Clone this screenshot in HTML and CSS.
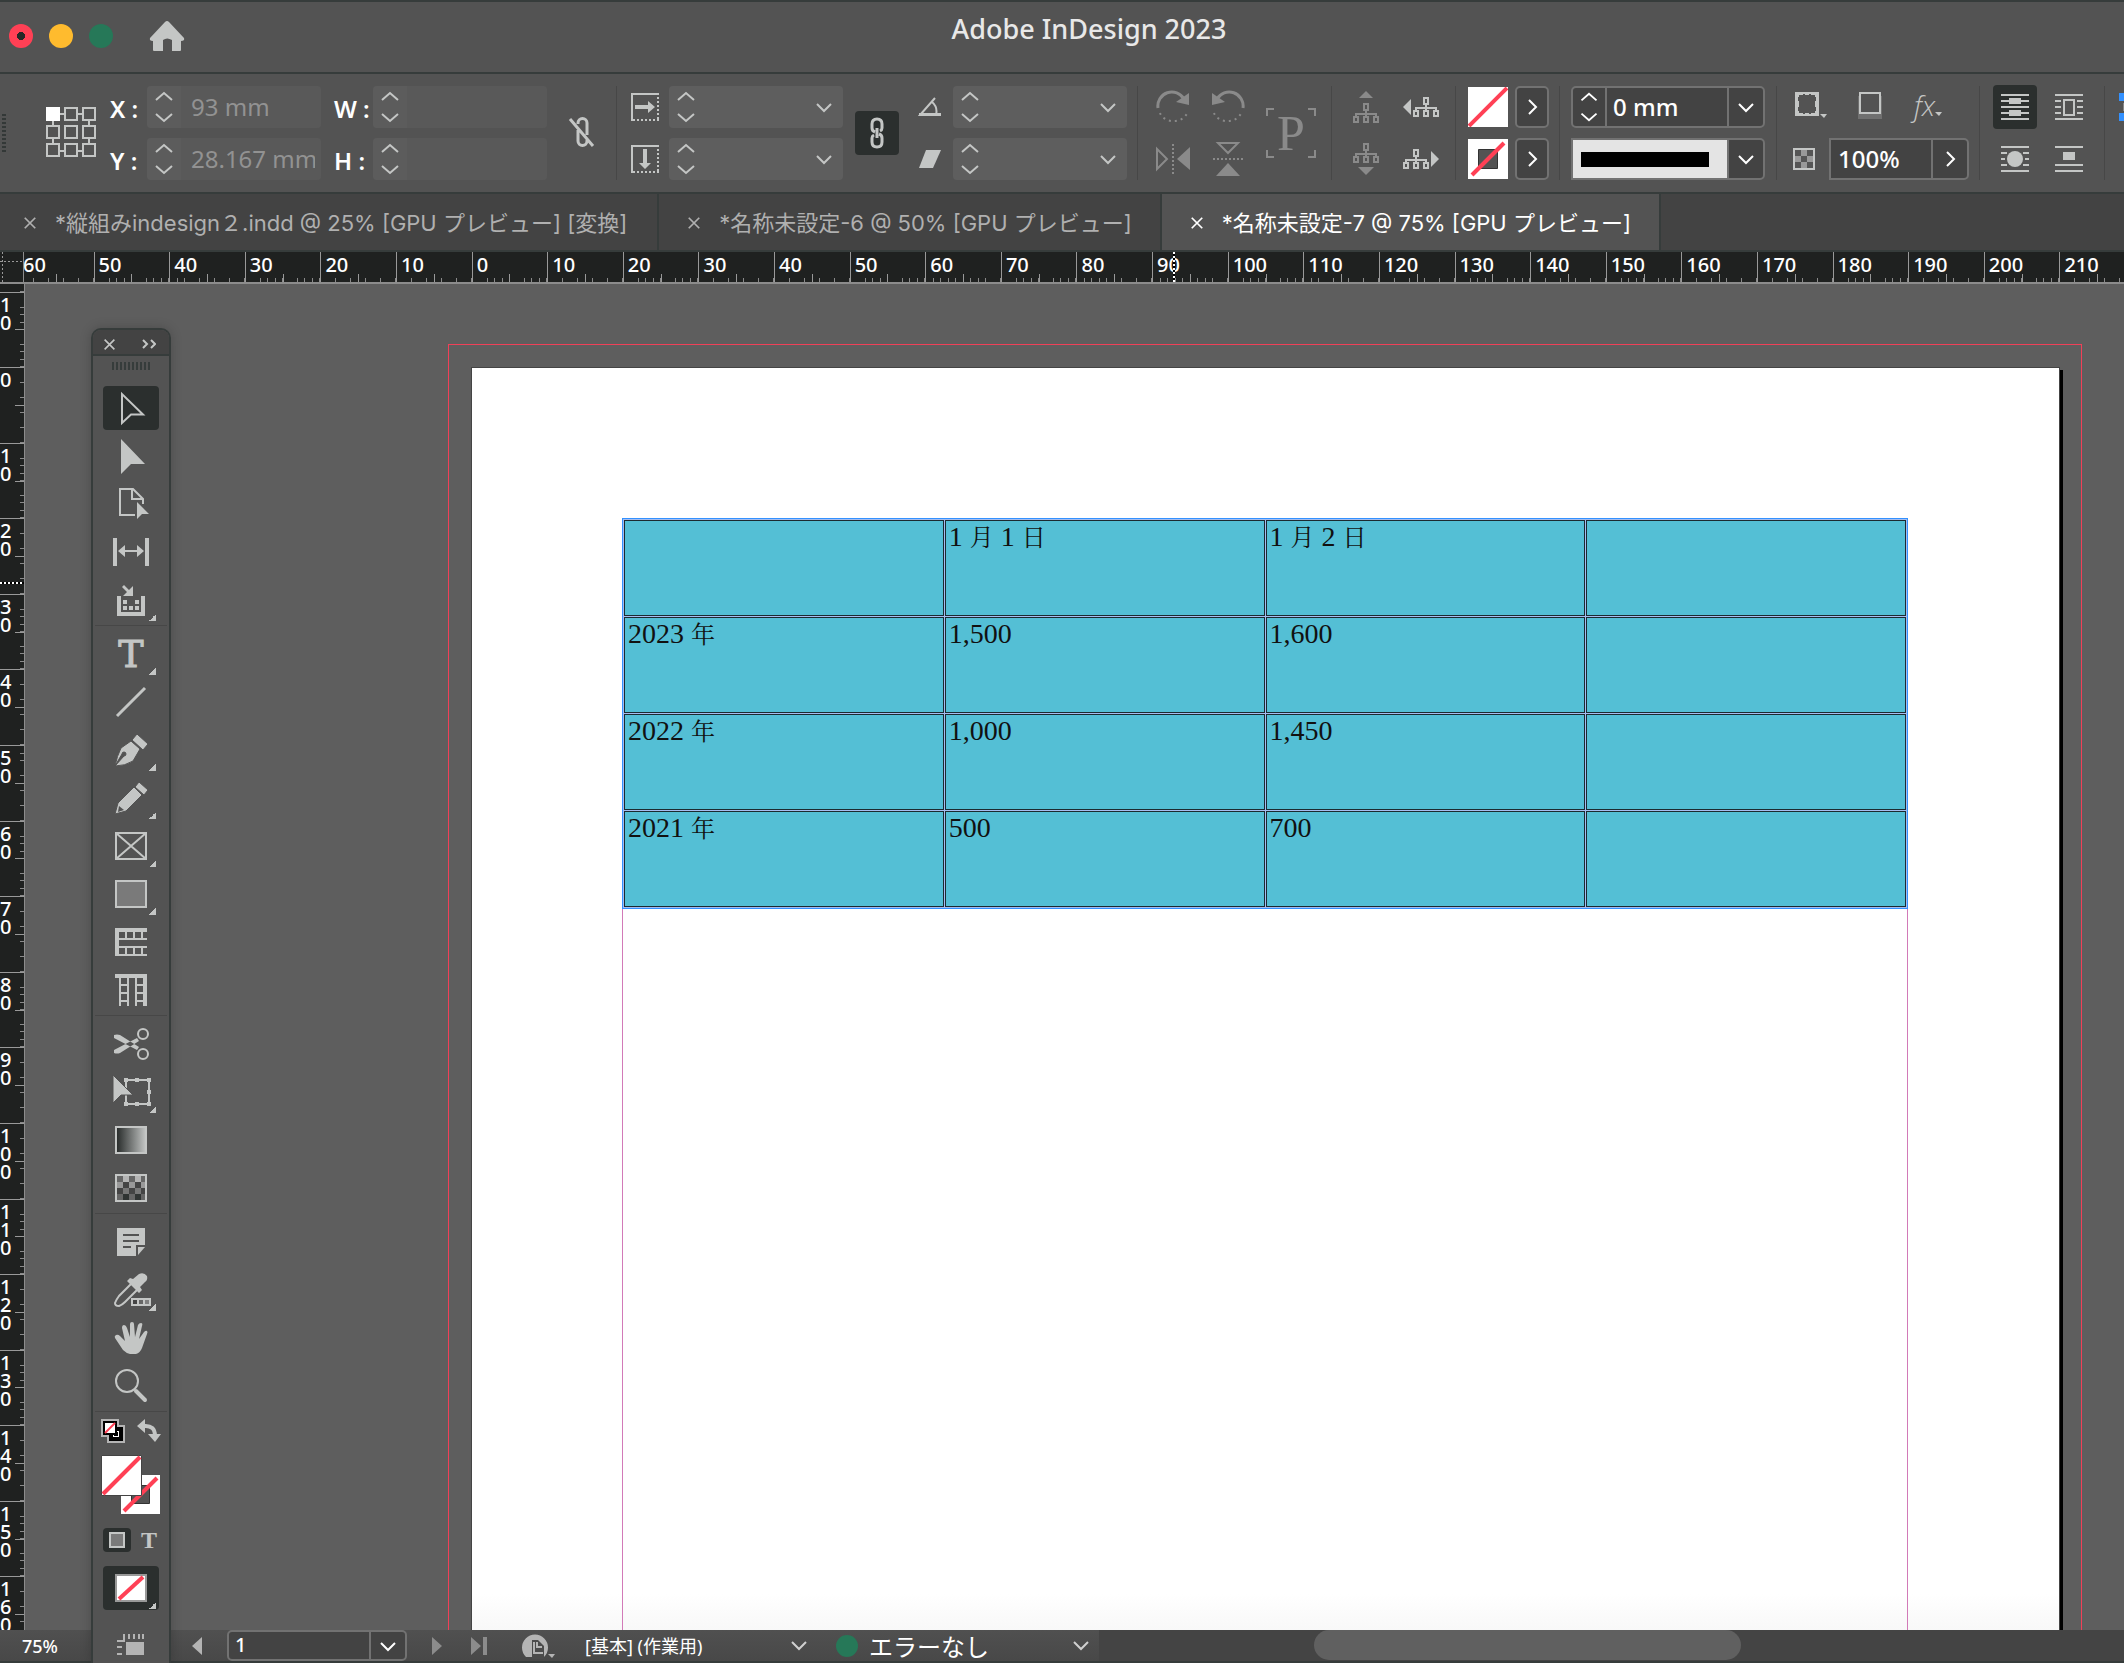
FILE: index.html
```html
<!DOCTYPE html>
<html lang="ja">
<head>
<meta charset="utf-8">
<title>Adobe InDesign 2023</title>
<link rel="stylesheet" href="styles.css">
</head>
<body>
<svg class="defs" width="0" height="0" aria-hidden="true">
  <defs>
    <symbol id="i-steps" viewBox="0 0 34 38"><path d="M9 12l8-7 8 7M9 26l8 7 8-7"/></symbol>
    <symbol id="i-down" viewBox="0 0 20 20"><path d="M3 7l7 7 7-7"/></symbol>
    <symbol id="i-right" viewBox="0 0 20 20"><path d="M7 3l7 7-7 7"/></symbol>
    <symbol id="i-close" viewBox="0 0 16 16"><path d="M2 2l12 12M14 2L2 14"/></symbol>
    <symbol id="i-tree" viewBox="0 0 26 20"><path d="M11 1h4v6h-4zM13 7v4M3 14v-3h20v3M1 14h4v5H1zM11 14h4v5h-4zM21 14h4v5h-4zM13 11v3" fill="none" stroke="currentColor" stroke-width="2"/></symbol>
    <linearGradient id="g-fade"><stop offset="0" stop-color="#242827"/><stop offset="1" stop-color="#c4c6c5"/></linearGradient>
  </defs>
</svg>
<div class="app">
  <header class="titlebar">
    <div class="lights">
      <button class="light red" aria-label="閉じる"></button>
      <button class="light yellow" aria-label="しまう"></button>
      <button class="light green" aria-label="拡大"></button>
      <button class="home" aria-label="ホーム"><svg width="36" height="32" viewBox="0 0 36 32"><path d="M18 1q1 0 2 1l15 16q1 3-3 3v9q0 1-1 1h-8V20q-5-3-9 0v11H5q-1 0-1-1v-9q-4 0-3-3L16 2q1-1 2-1z" fill="currentColor"/></svg></button>
    </div>
    <h1>Adobe InDesign 2023</h1>
  </header>

  <section class="control" aria-label="コントロール">
    <span class="grip"></span>
    <button class="refpoint" aria-label="基準点"><svg width="50" height="52" viewBox="0 0 50 52"><g fill="none" stroke="#c4c6c5" stroke-width="2"><path d="M14 7h4M32 7h4M14 44h4M32 44h4M7 14v5M43 14v5M7 32v5M43 32v5"/><path fill="#fff" stroke="#fff" d="M1 1h12v12H1z"/><path d="M19 1h12v12H19zM37 1h12v12H37zM1 19h12v12H1zM19 19h12v12H19zM37 19h12v12H37zM1 37h12v12H1zM19 37h12v12H19zM37 37h12v12H37z"/></g></svg></button>
    <div class="group coords">
      <label for="fx">X :</label>
      <div class="field dim"><svg class="steps"><use href="#i-steps"/></svg><input id="fx" value="93 mm"></div>
      <label for="fw">W :</label>
      <div class="field dim"><svg class="steps"><use href="#i-steps"/></svg><input id="fw"></div>
      <label for="fy">Y :</label>
      <div class="field dim"><svg class="steps"><use href="#i-steps"/></svg><input id="fy" value="28.167 mm"></div>
      <label for="fh">H :</label>
      <div class="field dim"><svg class="steps"><use href="#i-steps"/></svg><input id="fh"></div>
    </div>
    <button class="icon unlink" aria-label="縦横比を固定"><svg width="28" height="32" viewBox="0 0 28 32" fill="none" stroke="currentColor" stroke-width="3"><path d="M10 8V7a4 4 0 0 1 9 0v12M10 14v11a4 4 0 0 0 9 0v-1M2 3l23 27"/></svg></button>

    <div class="group scale">
      <svg width="28" height="28" viewBox="0 0 28 28"><path d="M1 28V1h27" fill="none" stroke="#c4c6c5" stroke-width="2"/><path d="M27 4v24M2 27h26" fill="none" stroke="#c4c6c5" stroke-width="2" stroke-dasharray="2 2"/><path d="M4 12h13V8l7 6-7 6v-4H4z" fill="#c4c6c5"/></svg>
      <div class="field"><svg class="steps"><use href="#i-steps"/></svg><input aria-label="拡大 X"><button class="drop" aria-label="拡大 X の候補"><svg><use href="#i-down"/></svg></button></div>
      <button class="toggle tall" aria-label="拡大率を連動"><svg width="20" height="32" viewBox="0 0 20 32" fill="none" stroke="#c4c6c5" stroke-width="3"><path d="M8 15q-3-1-3-4V7q0-5 5-5t5 5v4q0 2-2 3M12 17q3 1 3 4v4q0 5-5 5t-5-5v-4q0-2 2-3M10 11v10"/></svg></button>
      <svg class="m" width="24" height="20" viewBox="0 0 24 20"><path d="M17 1L2 18h21M14 5q6 5 4 13" fill="none" stroke="#c4c6c5" stroke-width="2"/><path d="M1 16h22v3H1z" fill="#c4c6c5"/></svg>
      <div class="field"><svg class="steps"><use href="#i-steps"/></svg><input aria-label="回転角度"><button class="drop" aria-label="回転角度の候補"><svg><use href="#i-down"/></svg></button></div>
      <svg width="28" height="28" viewBox="0 0 28 28"><path d="M1 28V1h27" fill="none" stroke="#c4c6c5" stroke-width="2"/><path d="M27 4v24M2 27h26" fill="none" stroke="#c4c6c5" stroke-width="2" stroke-dasharray="2 2"/><path d="M12 4h4v14h4l-6 6-6-6h4z" fill="#c4c6c5"/></svg>
      <div class="field"><svg class="steps"><use href="#i-steps"/></svg><input aria-label="拡大 Y"><button class="drop" aria-label="拡大 Y の候補"><svg><use href="#i-down"/></svg></button></div>
      <svg class="m" width="24" height="20" viewBox="0 0 24 20"><path d="M8 1h15l-8 18H1z" fill="#c4c6c5"/></svg>
      <div class="field"><svg class="steps"><use href="#i-steps"/></svg><input aria-label="傾斜角度"><button class="drop" aria-label="傾斜角度の候補"><svg><use href="#i-down"/></svg></button></div>
    </div>

    <div class="group rotate off">
      <button class="icon" aria-label="右に回転"><svg width="34" height="34" viewBox="0 0 34 34" fill="none" stroke="currentColor" stroke-width="3"><path d="M2 18A14 14 0 0 1 28 9"/><path d="M4 23a14 11 0 0 0 27 0" stroke-width="2" stroke-dasharray="2 4"/><path d="M33 3v12l-13-3z" fill="currentColor" stroke="none"/></svg></button>
      <button class="icon" aria-label="左に回転"><svg width="34" height="34" viewBox="0 0 34 34" fill="none" stroke="currentColor" stroke-width="3"><path d="M32 18A14 14 0 0 0 6 9"/><path d="M3 23a14 11 0 0 0 27 0" stroke-width="2" stroke-dasharray="2 4"/><path d="M1 3v12l13-3z" fill="currentColor" stroke="none"/></svg></button>
      <button class="icon pbox" aria-label="変換の表示"><svg width="50" height="50" viewBox="0 0 50 50" fill="none" stroke="currentColor" stroke-width="2"><path d="M1 8V1h7M42 1h7v7M49 42v7h-7M8 49H1v-7"/></svg><span>P</span></button>
      <button class="icon" aria-label="水平方向に反転"><svg width="36" height="34" viewBox="0 0 36 34" fill="none" stroke="currentColor" stroke-width="2"><path d="M2 7v20l10-10z"/><path d="M18 2v31" stroke-dasharray="2 2"/><path d="M35 5v23L22 17z" fill="currentColor" stroke="none"/></svg></button>
      <button class="icon" aria-label="垂直方向に反転"><svg width="32" height="36" viewBox="0 0 32 36" fill="none" stroke="currentColor" stroke-width="2"><path d="M6 2h20L16 12z"/><path d="M1 18h30" stroke-dasharray="2 2"/><path d="M4 35h24L16 22z" fill="currentColor" stroke="none"/></svg></button>
    </div>

    <div class="group tree">
      <button class="icon off" aria-label="コンテナーを選択"><svg width="26" height="34" viewBox="0 0 26 34"><path d="M6 8l7-7 7 7z" fill="currentColor"/><use href="#i-tree" y="13" width="26" height="20"/></svg></button>
      <button class="icon" aria-label="前を選択"><svg width="36" height="22" viewBox="0 0 36 22"><path d="M8 3v16l-8-8z" fill="currentColor"/><use href="#i-tree" x="10" y="1" width="26" height="20"/></svg></button>
      <button class="icon off" aria-label="内容を選択"><svg width="26" height="34" viewBox="0 0 26 34"><path d="M5 25h16l-8 8z" fill="currentColor"/><use href="#i-tree" y="1" width="26" height="20"/></svg></button>
      <button class="icon" aria-label="次を選択"><svg width="36" height="22" viewBox="0 0 36 22"><path d="M28 3v16l8-8z" fill="currentColor"/><use href="#i-tree" y="1" width="26" height="20"/></svg></button>
    </div>

    <div class="group paint">
      <button class="swatch" aria-label="塗り"><svg width="40" height="40" viewBox="0 0 40 40"><path fill="#fff" d="M0 0h40v40H0z"/><path d="M1 39L39 1" stroke="#ff4055" stroke-width="4"/></svg></button>
      <button class="box arrow" aria-label="塗りの選択"><svg><use href="#i-right"/></svg></button>
      <button class="swatch" aria-label="線"><svg width="40" height="40" viewBox="0 0 40 40"><path fill="#fff" d="M0 0h40v40H0z"/><path fill="#535353" stroke="#333" d="M10.500 10.500h19v19h-19z"/><path d="M4 36L36 4" stroke="#ff4055" stroke-width="4"/></svg></button>
      <button class="box arrow" aria-label="線の選択"><svg><use href="#i-right"/></svg></button>
    </div>

    <div class="group stroke">
      <div class="box combo"><svg class="steps"><use href="#i-steps"/></svg><input aria-label="線幅" value="0 mm"><button class="drop" aria-label="線幅の候補"><svg><use href="#i-down"/></svg></button></div>
      <button class="box combo linetype" aria-label="線種"><span class="line"></span><span class="drop"><svg><use href="#i-down"/></svg></span></button>
    </div>

    <div class="group effects">
      <div class="row">
        <button class="icon" aria-label="コーナーオプション"><svg width="34" height="28" viewBox="0 0 34 28"><path d="M2 1h24v24H2zM5 6v4h1v6H5v4h1v2h4v1h2v-1h4v1h2v-1h4v-2h1v-4h-1v-6h1V6h-1V4h-4V3h-2v1h-4V3h-2v1H6v2z" fill="currentColor" fill-rule="evenodd"/><path d="M27 23h7l-3 4z" fill="currentColor"/></svg></button>
        <button class="icon" aria-label="ドロップシャドウ"><svg width="28" height="30" viewBox="0 0 28 30"><path d="M1 6h24v23H1z" fill="#707070"/><path d="M3 3h20v20H3z" fill="#535353" stroke="currentColor" stroke-width="2"/></svg></button>
        <button class="icon fx" aria-label="効果"><span>fx</span><svg width="8" height="10" viewBox="0 0 8 10"><path d="M0 1h7L4 5z" fill="currentColor"/></svg></button>
      </div>
      <div class="row">
        <svg width="22" height="22" viewBox="0 0 22 22"><path fill="#555" stroke="#c4c6c5" stroke-width="2" d="M1 1h20v20H1z"/><path fill="#999" d="M8 2h6v6H8zM2 8h6v6H2zM14 8h6v6h-6zM8 14h6v6H8z"/></svg>
        <div class="box opacity"><input aria-label="不透明度" value="100%"><button class="drop" aria-label="不透明度の調整"><svg><use href="#i-right"/></svg></button></div>
      </div>
    </div>

    <div class="group wrap">
      <button class="toggle" aria-label="回り込みなし"><svg width="28" height="28" viewBox="0 0 28 28"><path d="M0 2h28M0 8h28M0 14h28M0 20h28M0 26h28" stroke="#c4c6c5" stroke-width="2"/><path d="M8 5h12v6H8zM8 17h12v6H8z" fill="#c4c6c5"/></svg></button>
      <button class="icon" aria-label="境界線で回り込む"><svg width="28" height="28" viewBox="0 0 28 28" fill="none" stroke="currentColor" stroke-width="2"><path d="M0 2h28M0 26h28M0 8h6M0 14h6M0 20h6M22 8h6M22 14h6M22 20h6M9 7h10v15H9z"/></svg></button>
      <button class="icon" aria-label="オブジェクトのシェイプで回り込む"><svg width="28" height="28" viewBox="0 0 28 28"><path d="M0 2h28M0 26h28M0 8h6M0 14h4M0 20h6M22 8h6M24 14h4M22 20h6" stroke="currentColor" stroke-width="2"/><circle cx="14" cy="14" r="8" fill="currentColor"/></svg></button>
      <button class="icon" aria-label="オブジェクトを挟んで回り込む"><svg width="28" height="28" viewBox="0 0 28 28"><path d="M0 2h28M0 20h28M0 26h28" stroke="currentColor" stroke-width="2"/><path d="M8 7h12v8H8z" fill="currentColor"/></svg></button>
    </div>

    <div class="group more">
      <button class="icon" aria-label="整列"><svg width="26" height="28" viewBox="0 0 26 28"><path d="M0 0h26v8H0zM0 20h26v8H0z" fill="#3391ff"/><path d="M4 10h22v8H4z" fill="#888"/></svg></button>
    </div>
  </section>

  <nav class="tabs">
    <div class="tab"><button aria-label="タブを閉じる"><svg><use href="#i-close"/></svg></button><a href="#d1">*縦組みindesign２.indd @ 25% [GPU プレビュー] [変換]</a></div>
    <div class="tab"><button aria-label="タブを閉じる"><svg><use href="#i-close"/></svg></button><a href="#d2">*名称未設定-6 @ 50% [GPU プレビュー]</a></div>
    <div class="tab active"><button aria-label="タブを閉じる"><svg><use href="#i-close"/></svg></button><a href="#d3">*名称未設定-7 @ 75% [GPU プレビュー]</a></div>
  </nav>

  <div class="hruler">
    <span class="origin"></span>
    <div class="hscale">
      <span>60</span><span>50</span><span>40</span><span>30</span><span>20</span><span>10</span><span>0</span><span>10</span><span>20</span><span>30</span><span>40</span><span>50</span><span>60</span><span>70</span><span>80</span><span>90</span><span>100</span><span>110</span><span>120</span><span>130</span><span>140</span><span>150</span><span>160</span><span>170</span><span>180</span><span>190</span><span>200</span><span>210</span>
    </div>
    <span class="hmark"></span>
  </div>

  <main class="work">
    <div class="vruler">
      <div class="vscale">
        <span></span><span>1<br>0</span><span>0</span><span>1<br>0</span><span>2<br>0</span><span>3<br>0</span><span>4<br>0</span><span>5<br>0</span><span>6<br>0</span><span>7<br>0</span><span>8<br>0</span><span>9<br>0</span><span>1<br>0<br>0</span><span>1<br>1<br>0</span><span>1<br>2<br>0</span><span>1<br>3<br>0</span><span>1<br>4<br>0</span><span>1<br>5<br>0</span><span>1<br>6<br>0</span>
      </div>
      <span class="vmark"></span>
    </div>
    <div class="pasteboard">
      <div class="bleed">
        <article class="page">
          <div class="frame">
            <table>
              <tr><td></td><td>1 <span>月</span> 1 <span>日</span></td><td>1 <span>月</span> 2 <span>日</span></td><td></td></tr>
              <tr><td>2023 <span>年</span></td><td>1,500</td><td>1,600</td><td></td></tr>
              <tr><td>2022 <span>年</span></td><td>1,000</td><td>1,450</td><td></td></tr>
              <tr><td>2021 <span>年</span></td><td>500</td><td>700</td><td></td></tr>
            </table>
          </div>
        </article>
      </div>
    </div>
  </main>

  <footer class="status">
    <span class="zoom">75%</span>
    <button class="nav" aria-label="前のページ"><svg width="10" height="18" viewBox="0 0 10 18"><path d="M10 0v18L0 9z" fill="#b4b4b4"/></svg></button>
    <div class="box pageno"><input aria-label="ページ" value="1"><button class="drop" aria-label="ページの一覧"><svg><use href="#i-down"/></svg></button></div>
    <button class="nav next" aria-label="次のページ"><svg width="10" height="18" viewBox="0 0 10 18"><path d="M0 0v18l10-9z" fill="#8c8c8c"/></svg></button>
    <button class="nav last" aria-label="最後のページ"><svg width="16" height="18" viewBox="0 0 16 18"><path d="M0 0v18l10-9zM12 0h4v18h-4z" fill="#8c8c8c"/></svg></button>
    <button class="nav open" aria-label="開く"><svg width="36" height="26" viewBox="0 0 36 26"><path d="M5 24a13 13 0 1 1 18 0z" fill="#b4b4b4"/><path d="M11 26V7h6l6 6v13z" fill="#4b4b4b"/><path d="M13 9v11h9M16 9v5h5" fill="none" stroke="#b4b4b4" stroke-width="2"/><path d="M27 21h7l-3 4z" fill="#b4b4b4"/></svg></button>
    <select class="preset" aria-label="プリフライトプロファイル"><option>[基本] (作業用)</option></select>
    <span class="ok"></span>
    <select class="errors" aria-label="プリフライト"><option>エラーなし</option></select>
    <div class="scroll"><span></span></div>
  </footer>

  <aside class="tools" aria-label="ツール">
    <div class="toolhead"><button aria-label="パネルを閉じる"><svg width="13" height="13"><use href="#i-close"/></svg></button><button aria-label="2 列で表示"><svg width="14" height="10" viewBox="0 0 14 10"><path d="M1 1l4 4-4 4M9 1l4 4-4 4"/></svg></button></div>
    <span class="toolgrip"></span>
    <div class="set">
      <button class="tool on" aria-label="選択"><svg viewBox="0 0 40 40"><path d="M11 6v29l9-8.500h12z" fill="none" stroke="currentColor" stroke-width="2"/></svg></button>
      <button class="tool" aria-label="ダイレクト選択"><svg viewBox="0 0 40 40"><path d="M10 3v35l10-10h14z" fill="currentColor"/></svg></button>
      <button class="tool" aria-label="ページ"><svg viewBox="0 0 40 40"><path d="M24 31H9V5h13l10 10v5M21 5v10h11" fill="none" stroke="currentColor" stroke-width="2"/><path d="M26 18v17l5-5h7z" fill="currentColor"/></svg></button>
      <button class="tool" aria-label="間隔"><svg viewBox="0 0 40 40"><path d="M2 6h4v28H2zM34 6h4v28h-4zM7 19l7-6v5h12v-5l7 6-7 6v-5H14v5z" fill="currentColor"/></svg></button>
      <button class="tool sub" aria-label="コンテンツ収集"><svg viewBox="0 0 40 40"><path d="M6 16h4v16h20V16h4v20H6zM12 20h4v4h-4zM24 20h4v4h-4zM12 26h4v4h-4zM18 26h4v4h-4zM24 26h4v4h-4zM22 6v10H12l4-4-5-5 2-2 5 5z" fill="currentColor"/></svg></button>
    </div>
    <div class="set">
      <button class="tool sub" aria-label="文字"><span class="bigt">T</span></button>
      <button class="tool" aria-label="線"><svg viewBox="0 0 40 40"><path d="M6 34L34 6" stroke="currentColor" stroke-width="3"/></svg></button>
      <button class="tool sub" aria-label="ペン"><svg viewBox="0 0 40 40"><path d="M4 36q2-10 6-18l10-7 9 8-7 12q-8 5-18 5l9-10a2 2 0 1 0-2-2zM26 4l11 10-5 6-11-10z" fill="currentColor" stroke="#535353" stroke-width="1"/></svg></button>
      <button class="tool sub" aria-label="鉛筆"><svg viewBox="0 0 40 40"><path d="M4 36l3-11L23 9l8 8-16 16zM28 4l9 8-4 5-9-8z" fill="currentColor" stroke="#535353" stroke-width="1"/><path d="M8 28l5 4-6 2z" fill="#535353"/></svg></button>
      <button class="tool sub" aria-label="長方形フレーム"><svg viewBox="0 0 40 40"><path d="M5 7h30v26H5zL35 33M35 7L5 33" fill="none" stroke="currentColor" stroke-width="2"/></svg></button>
      <button class="tool sub" aria-label="長方形"><svg viewBox="0 0 40 40"><path d="M5 7h30v26H5z" fill="#7a7a7a" stroke="currentColor" stroke-width="2"/></svg></button>
      <button class="tool" aria-label="横組みグリッド"><svg viewBox="0 0 40 40"><path d="M4 6h4v28H4zM4 6h32v4H4zM4 16h32v2H4zM4 24h32v2H4zM4 32h32v2H4zM14 8h2v9h-2zM22 8h2v9h-2zM30 8h2v9h-2zM14 25h2v8h-2zM22 25h2v8h-2zM30 25h2v8h-2z" fill="currentColor"/></svg></button>
      <button class="tool" aria-label="縦組みグリッド"><svg viewBox="0 0 40 40"><path d="M4 4h32v4H4zM8 4h2v32H8zM16 4h2v32h-2zM24 4h2v32h-2zM32 4h4v32h-4zM9 14h8v2H9zM9 22h8v2H9zM9 30h8v2H9zM25 14h8v2h-8zM25 22h8v2h-8zM25 30h8v2h-8z" fill="currentColor"/></svg></button>
    </div>
    <div class="set">
      <button class="tool" aria-label="はさみ"><svg viewBox="0 0 40 40"><path d="M3 11q3-1 6 0l19 12-2 3L3 14zM3 29q3 1 6 0l19-12-2-3L3 26z" fill="currentColor"/><circle cx="32" cy="10" r="5" fill="none" stroke="currentColor" stroke-width="2"/><circle cx="32" cy="30" r="5" fill="none" stroke="currentColor" stroke-width="2"/></svg></button>
      <button class="tool sub" aria-label="自由変形"><svg viewBox="0 0 40 40"><path d="M15 8h23v24H15z" fill="none" stroke="currentColor" stroke-width="2"/><path d="M13 6h4v4h-4zM24 6h4v4h-4zM36 6h4v4h-4zM36 18h4v4h-4zM36 30h4v4h-4zM24 30h4v4h-4zM13 30h4v4h-4z" fill="currentColor"/><path d="M2 3v28l8-8h12z" fill="currentColor" stroke="#535353" stroke-width="1"/></svg></button>
      <button class="tool" aria-label="グラデーションスウォッチ"><svg viewBox="0 0 40 40"><path d="M5 7h30v26H5z" fill="url(#g-fade)" stroke="currentColor" stroke-width="2"/></svg></button>
      <button class="tool" aria-label="グラデーションぼかし"><svg viewBox="0 0 40 40"><path d="M5 7h30v26H5z" fill="#666" stroke="currentColor" stroke-width="2"/><path d="M12 8h6v6h-6zM24 8h6v6h-6z" fill="#b4b4b4"/><path d="M6 14h6v6H6zM18 14h6v6h-6zM30 14h4v6h-4z" fill="#999"/><path d="M12 20h6v6h-6zM24 20h6v6h-6z" fill="#777"/><path d="M12 14h6v6h-6zM24 14h6v6h-6zM6 20h6v6H6zM18 20h6v6h-6zM30 20h4v6h-4z" fill="#444"/><path d="M12 26h6v6h-6zM24 26h6v6h-6z" fill="#303433"/></svg></button>
    </div>
    <div class="set">
      <button class="tool" aria-label="注釈"><svg viewBox="0 0 40 40"><path d="M6 6h28v17h-9v11H6zM27 25h7l-7 8z" fill="currentColor"/><path d="M12 13h16M12 19h16M12 25h8" stroke="#535353" stroke-width="2"/></svg></button>
      <button class="tool sub" aria-label="カラーテーマ"><svg viewBox="0 0 40 40"><path d="M21 13L8 26q-3 4-4 7 0 3 4 3 3-1 6-4l13-13" fill="none" stroke="currentColor" stroke-width="2"/><path d="M19 8l3 1 6-5q5-2 8 2 1 4-2 6l-5 5 2 3-3 3-12-12z" fill="currentColor"/><path d="M20 28h20v8H20z" fill="currentColor"/><path d="M22 30h4v4h-4z" fill="#444"/><path d="M28 30h4v4h-4z" fill="#666"/><path d="M34 30h4v4h-4z" fill="#808080"/></svg></button>
      <button class="tool" aria-label="手のひら"><svg viewBox="0 0 40 40"><path d="M14 23L11 10q0-3 2-3t3 3l3 9 0-13q0-2 2-2t2 2l1 13 3-12q1-2 3-2t1 3l-3 13 5-7q2-2 3-1t0 3l-5 14q-2 5-6 6h-6q-4-1-7-4l-8-12q-1-2 1-3t4 1z" fill="currentColor"/></svg></button>
      <button class="tool" aria-label="ズーム"><svg viewBox="0 0 40 40" fill="none" stroke="currentColor"><circle cx="16" cy="15" r="11" stroke-width="2"/><path d="M25 25l9 9" stroke-width="4" stroke-linecap="round"/></svg></button>
    </div>
    <div class="set colors">
      <div class="pair">
        <button class="icon" aria-label="初期設定の塗りと線"><svg width="24" height="24" viewBox="0 0 24 24"><path fill="#b4b4b4" d="M0 0h18v6h6v18H6v-6H0z"/><path fill="#000" d="M8 8h14v14H8z"/><path fill="#fff" d="M12 12h6v6h-6z"/><path fill="#000" d="M13 13h4v4h-4z"/><path fill="#000" d="M2 2h14v14H2z"/><path fill="#fff" d="M4 4h10v10H4z"/><path d="M4 14L14 4" stroke="#ff4055" stroke-width="2"/></svg></button>
        <button class="icon" aria-label="塗りと線を入れ替え"><svg width="24" height="24" viewBox="0 0 24 24"><path d="M7 7q11-1 11 10" fill="none" stroke="currentColor" stroke-width="4"/><path d="M8 0v14L0 7zM11 15h13l-6 8z" fill="currentColor"/></svg></button>
      </div>
      <button class="fillstroke" aria-label="塗りと線"><svg width="60" height="60" viewBox="0 0 60 60"><path fill="#fff" d="M20 20h39v39H20z"/><path fill="#535353" stroke="#333" d="M30.500 30.500h18v18h-18z"/><path d="M23 56l33-33" stroke="#ff4055" stroke-width="4"/><path fill="#fff" stroke="#444" d="M.5.500h40v40H.5z"/><path d="M2 39L39 2" stroke="#ff4055" stroke-width="4"/></svg></button>
      <div class="pair modes">
        <button class="toggle mini" aria-label="オブジェクトに適用"><svg width="16" height="16" viewBox="0 0 16 16"><path d="M1 1h14v14H1z" fill="#7a7a7a" stroke="#c4c6c5" stroke-width="2"/></svg></button>
        <button class="icon smallt" aria-label="テキストに適用">T</button>
      </div>
      <button class="tool on sub" aria-label="適用なし"><svg class="none" viewBox="0 0 32 28"><path d="M1 1h30v26H1z" fill="#fff" stroke="#999" stroke-width="2"/><path d="M4 25L28 3" stroke="#ff4055" stroke-width="4"/></svg></button>
      <button class="icon screen" aria-label="スクリーンモード"><svg width="28" height="22" viewBox="0 0 28 22"><path d="M9 8h18v13H9z" fill="#b4b4b4"/><path d="M7 0v7H0M12 0v5M17 0v5M22 0v5M26 0v5M0 13h5M0 20h5" fill="none" stroke="#b4b4b4" stroke-width="2"/></svg></button>
    </div>
  </aside>
</div>
</body>
</html>
```
FILE: styles.css
```css
* { box-sizing: border-box; }

body {
  margin: 0;
  background: #5e5e5e;
  color: #fff;
  font-family: "Noto Sans", "Noto Sans CJK JP", sans-serif;
  font-size: 24px;
}

button, input, select {
  margin: 0;
  padding: 0;
  border: 0;
  background: none;
  color: inherit;
  font: inherit;
  appearance: none;
}

input { min-width: 0; }
svg { display: block; flex: none; }
.defs { position: absolute; }

.app {
  position: relative;
  display: flex;
  flex-direction: column;
  height: 100vh;
  overflow: hidden;
  border-top: 2px solid #363c3b;
}

/* Title bar */
.titlebar {
  display: grid;
  grid-template-columns: 1fr auto 1fr;
  align-items: center;
  height: 72px;
  flex: none;
  padding-left: 54px;
  background: #535353;
  border-bottom: 2px solid #363c3b;
}
.titlebar h1 {
  margin: 0 0 16px;
  font-size: 27px;
  line-height: 32px;
  font-weight: 500;
  color: #e8e8e8;
}
.lights {
  display: flex;
  align-items: center;
  gap: 16px;
  margin-left: -45px;
  padding-bottom: 2px;
}
.light { width: 24px; height: 24px; border-radius: 50%; }
.red { background: radial-gradient(circle, #242827 0 4px, #ff4055 4px); }
.yellow { background: #ffbb2e; }
.green { background: #267858; }
.home { margin-left: 20px; color: #c4c6c5; }

/* Control bar */
.control {
  display: flex;
  align-items: flex-start;
  height: 120px;
  flex: none;
  padding-top: 12px;
  overflow: hidden;
  background: #535353;
  border-bottom: 2px solid #363c3b;
  color: #c4c6c5;
}
.control > * { flex: none; }
.grip {
  width: 4px;
  height: 38px;
  margin: 28px 40px 0 2px;
  background: repeating-linear-gradient(#333837 0 2px, transparent 2px 4px);
}
.refpoint { margin-top: 21px; }
.group {
  display: grid;
  grid-auto-rows: 42px;
  gap: 10px 0;
  height: 94px;
  align-items: center;
  border-left: 1px solid #474747;
}
.icon {
  display: flex;
  align-items: center;
  justify-content: center;
  color: #c4c6c5;
}
.off, .off .icon { color: #8a8a8a; }
.coords {
  grid-template-columns: 37px 174px 52px 174px;
  margin-left: 14px;
  border: 0;
}
.coords label { font-weight: 600; padding-top: 2px; color: #fff; }
.coords label:nth-of-type(even) { padding-left: 13px; }
.field {
  display: flex;
  align-items: center;
  height: 42px;
  border-radius: 4px;
  background: #5e5e5e;
}
.field.dim { background: linear-gradient(90deg, #5c5c5c 34px, #595959 34px); }
.field input {
  flex: 1;
  height: 100%;
  padding: 0 0 2px 10px;
  margin-right: 6px;
  color: #929292;
}
.steps, .drop svg, .arrow svg, .tab svg, .toolhead svg {
  fill: none;
  stroke: currentColor;
  stroke-width: 2;
}
.steps { width: 34px; height: 38px; }
.drop { display: flex; align-items: center; justify-content: center; width: 38px; height: 100%; }
.drop svg, .arrow svg { width: 20px; height: 20px; }
.unlink { width: 69px; height: 92px; }
.scale { grid-template-columns: 52px 174px 68px 42px 174px; padding-right: 10px; }
.scale > svg { margin-left: 14px; }
.scale > .m { margin-left: 7px; }
.toggle {
  display: flex;
  align-items: center;
  justify-content: center;
  width: 44px;
  height: 44px;
  border-radius: 4px;
  background: #2b2f2e;
}
.tall { grid-row: 1 / span 2; grid-column: 3; margin-left: 12px; }
.rotate { grid-template-columns: 55px 55px 72px; padding: 0 4px 0 7px; }
.pbox { grid-row: 1 / span 2; grid-column: 3; display: grid; place-items: center; }
.pbox > * { grid-area: 1 / 1; }
.pbox span { font: 50px/50px "Liberation Serif", serif; }
.tree { grid-template-columns: 55px 56px; padding: 0 6px; }
.paint { grid-template-columns: 40px 34px; column-gap: 7px; padding: 0 10px 0 12px; }
.box {
  display: flex;
  align-items: center;
  height: 42px;
  border: 2px solid #727272;
  border-radius: 5px;
  background: #434343;
  color: #fff;
}
.box input { flex: 1; height: 100%; padding: 0 0 2px 6px; font-weight: 500; }
.box .drop { width: 36px; border-left: 2px solid #727272; }
.arrow { justify-content: center; }
.stroke { grid-template-columns: 194px; padding: 0 11px; }
.combo .steps { border-right: 2px solid #727272; }
.linetype { border-radius: 0 5px 5px 0; }
.linetype .line {
  flex: 1;
  height: 38px;
  border: solid #e4e4e4;
  border-width: 12px 18px 11px 8px;
  background: #000;
}
.effects { padding: 0 10px 0 16px; grid-template-columns: 176px; }
.row { display: flex; align-items: center; justify-content: space-between; }
.row:first-child { padding: 0 26px 4px 0; }
.opacity { width: 140px; border-radius: 0 5px 5px 0; }
.opacity input { padding-left: 7px; }
.fx { align-items: flex-end; }
.fx span { font: italic 300 28px/32px "Open Sans", sans-serif; }
.wrap { grid-template-columns: 44px 44px; column-gap: 10px; padding: 0 13px; }
.more { padding-left: 14px; }

/* Document tabs */
.tabs {
  display: flex;
  height: 58px;
  flex: none;
  background: #434343;
  border-bottom: 2px solid #363c3b;
  font: 22px/56px Inter, "Noto Sans CJK JP", sans-serif;
  color: #b0b0b0;
}
.tab {
  display: flex;
  align-items: center;
  padding: 1px 28px 0;
  border-right: 2px solid #363c3b;
  white-space: nowrap;
}
.tab:first-child { padding: 1px 30px 0 23px; }
.tab svg { width: 14px; height: 14px; }
.tab button { margin-right: 18px; }
.tab a { color: inherit; text-decoration: none; }
.active { background: #535353; color: #fff; }

/* Rulers */
.hruler {
  position: relative;
  height: 32px;
  flex: none;
  overflow: hidden;
  background: #1f2120;
  border-bottom: 2px solid #8c8c8c;
  font-size: 20px;
  font-weight: 500;
}
.origin {
  position: absolute;
  z-index: 1;
  inset: 0 auto 0 0;
  width: 24px;
  background:
    repeating-linear-gradient(#999 0 2px, transparent 2px 4px) 2px 0 / 1px 100% no-repeat,
    repeating-linear-gradient(90deg, #999 0 2px, transparent 2px 4px) 0 9px / 100% 1px no-repeat,
    #1f2120;
  border-right: 1px solid #8c8c8c;
}
.hscale {
  display: grid;
  grid-template-columns: repeat(28, 1fr);
  width: 2117px;
  height: 30px;
  margin-left: 18px;
}
.hscale span {
  padding-left: 4px;
  line-height: 25px;
  border-left: 1px solid #999;
  background:
    linear-gradient(#999, #999) 50% 100% / 1px 8px no-repeat,
    repeating-linear-gradient(90deg, transparent 0 9%, #8a8a8a 9% 10%) 0 100% / 100% 4px no-repeat;
}
.hmark {
  position: absolute;
  left: 1173px;
  top: 0;
  width: 2px;
  height: 30px;
  background: repeating-linear-gradient(#fff 0 2px, #000 2px 4px);
}
.work { display: flex; flex: 1; min-height: 0; }
.vruler {
  position: relative;
  width: 25px;
  flex: none;
  overflow: hidden;
  background: #1f2120;
  border-right: 1px solid #8c8c8c;
  font-size: 20px;
  font-weight: 500;
}
.vscale {
  display: grid;
  grid-template-rows: repeat(19, 1fr);
  height: 1436px;
  margin-top: -68px;
}
.vscale span {
  min-height: 0;
  padding-top: 3px;
  line-height: 18px;
  border-top: 1px solid #999;
  background:
    linear-gradient(#999, #999) 100% 50% / 9px 1px no-repeat,
    repeating-linear-gradient(transparent 0 9%, #8a8a8a 9% 10%) 100% 0 / 4px 100% no-repeat;
}
.vmark {
  position: absolute;
  left: 0;
  top: 298px;
  width: 24px;
  height: 2px;
  background: repeating-linear-gradient(90deg, #fff 0 2px, #000 2px 4px);
}

/* Pasteboard and page */
.pasteboard {
  display: flex;
  flex: 1;
  padding: 60px 42px 0 423px;
  overflow: hidden;
  background: #5e5e5e;
}
.bleed {
  display: flex;
  flex: 1;
  padding: 22px 21px 0 22px;
  border: solid #f04058;
  border-width: 1px 1px 0;
}
.page {
  flex: 1;
  padding: 150px 151px 0 150px;
  border: 1px solid #444;
  border-bottom: 0;
  background: linear-gradient(0deg, #f8f8f8, #fff 36px);
  box-shadow: 3px 3px 0 #000;
}
.frame {
  height: 100%;
  border: solid #d27ab8;
  border-width: 0 1px;
}
table {
  width: calc(100% + 2px);
  margin: 0 -1px;
  table-layout: fixed;
  border: 1px solid #3391ff;
  border-spacing: 1px;
  background: #a5bdf0;
  color: #111;
  font: 28px/32px "Liberation Serif", "Noto Serif CJK JP", "Noto Sans CJK JP", serif;
}
td {
  height: 96px;
  padding: 0 3px;
  vertical-align: top;
  border: 1px solid #1c2a30;
  background: #54bfd5;
}
td span { font-size: 24px; line-height: 24px; }

/* Status bar */
.status {
  display: flex;
  align-items: center;
  height: 33px;
  flex: none;
  background: linear-gradient(#505050, #484848);
  border-bottom: 2px solid #363c3b;
  font-size: 20px;
}
.status > * { flex: none; }
.zoom { width: 170px; padding-left: 22px; font-size: 18px; font-weight: 500; }
.nav { margin-left: 22px; }
.pageno { width: 180px; height: 31px; margin-left: 25px; }
.next { margin-left: 25px; }
.last { margin-left: 29px; }
.open { margin-left: 34px; }
.status select {
  height: 31px;
  background: url("data:image/svg+xml,%3Csvg xmlns='http://www.w3.org/2000/svg' width='16' height='10'%3E%3Cpath d='M1 1l7 7 7-7' fill='none' stroke='%23d0d0d0' stroke-width='2'/%3E%3C/svg%3E") no-repeat 100% 50%;
}
.preset { width: 222px; margin-left: 28px; font-size: 18px; }
.ok { width: 22px; height: 22px; margin-left: 29px; border-radius: 50%; background: #267858; }
.errors { width: 220px; margin-left: 11px; font-size: 24px; }
.status .scroll { flex: 1; height: 31px; margin-left: 10px; padding-left: 215px; background: #444; }
.scroll span { display: block; width: 427px; height: 30px; border-radius: 15px; background: #606060; }

/* Floating tool panel */
.tools {
  position: absolute;
  left: 91px;
  top: 326px;
  bottom: 0;
  width: 80px;
  overflow: hidden;
  border: 2px solid #363c3b;
  border-bottom: 0;
  border-radius: 10px 10px 0 0;
  background: #535353;
  box-shadow: 0 0 12px #0003;
}
.toolhead {
  display: flex;
  align-items: center;
  justify-content: space-between;
  height: 26px;
  padding: 4px 13px 0 10px;
  background: #434343;
  border-bottom: 2px solid #363c3b;
  color: #c4c6c5;
}
.toolgrip {
  display: block;
  width: 38px;
  height: 8px;
  margin: 6px auto 14px;
  background: repeating-linear-gradient(90deg, #363c3b 0 2px, transparent 2px 4px);
}
.set {
  display: flex;
  flex-direction: column;
  align-items: center;
  margin: 0 2px;
  padding: 2px 0 3px;
  gap: 4px;
  border-bottom: 1px solid #474747;
}
.set + .set { padding-top: 6px; }
.tool {
  position: relative;
  display: flex;
  align-items: center;
  justify-content: center;
  width: 56px;
  height: 44px;
  border-radius: 4px;
  color: #c4c6c5;
}
.tool svg { width: 40px; height: 40px; }
.on { background: #2b2f2e; }
.sub::after {
  content: "";
  position: absolute;
  right: 3px;
  bottom: 1px;
  width: 7px;
  height: 7px;
  background: linear-gradient(135deg, transparent 50%, #c4c6c5 50%);
}
.bigt { font: 38px/44px "DejaVu Serif", serif; -webkit-text-stroke: 1px currentColor; }
.colors { border: 0; gap: 0; }
.pair { display: flex; justify-content: space-between; align-items: center; width: 60px; height: 26px; }
.fillstroke { margin: 11px 0 12px; }
.modes { width: 56px; }
.mini { width: 28px; height: 24px; }
.smallt { width: 20px; font: bold 24px/24px "Liberation Serif", serif; }
.modes + .tool { margin-top: 13px; }
.tool .none { width: 32px; height: 28px; }
.screen { margin-top: 24px; }
```
